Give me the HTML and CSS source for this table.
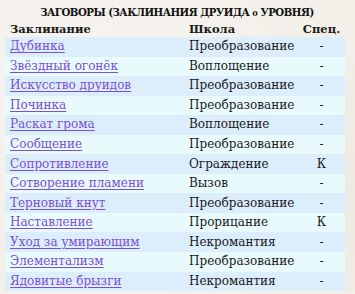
FILE: index.html
```html
<!DOCTYPE html>
<html lang="ru">
<head>
<meta charset="utf-8">
<link rel="stylesheet" href="styles.css">
</head>
<body>
<div class="page">
  <div class="title">ЗАГОВОРЫ (ЗАКЛИНАНИЯ ДРУИДА <span class="zero">0</span> УРОВНЯ)</div>
  <table class="spells">
    <thead>
      <tr><th class="c-name">Заклинание</th><th class="c-school">Школа</th><th class="c-spec">Спец.</th></tr>
    </thead>
    <tbody>
      <tr><td><a href="#">Дубинка</a></td><td>Преобразование</td><td class="c-spec">-</td></tr>
      <tr><td><a href="#">Звёздный огонёк</a></td><td>Воплощение</td><td class="c-spec">-</td></tr>
      <tr><td><a href="#">Искусство друидов</a></td><td>Преобразование</td><td class="c-spec">-</td></tr>
      <tr><td><a href="#">Починка</a></td><td>Преобразование</td><td class="c-spec">-</td></tr>
      <tr><td><a href="#">Раскат грома</a></td><td>Воплощение</td><td class="c-spec">-</td></tr>
      <tr><td><a href="#">Сообщение</a></td><td>Преобразование</td><td class="c-spec">-</td></tr>
      <tr><td><a href="#">Сопротивление</a></td><td>Ограждение</td><td class="c-spec">К</td></tr>
      <tr><td><a href="#">Сотворение пламени</a></td><td>Вызов</td><td class="c-spec">-</td></tr>
      <tr><td><a href="#">Терновый кнут</a></td><td>Преобразование</td><td class="c-spec">-</td></tr>
      <tr><td><a href="#">Наставление</a></td><td>Прорицание</td><td class="c-spec">К</td></tr>
      <tr><td><a href="#">Уход за умирающим</a></td><td>Некромантия</td><td class="c-spec">-</td></tr>
      <tr><td><a href="#">Элементализм</a></td><td>Преобразование</td><td class="c-spec">-</td></tr>
      <tr><td><a href="#">Ядовитые брызги</a></td><td>Некромантия</td><td class="c-spec">-</td></tr>
    </tbody>
  </table>
</div>
</body>
</html>
```

FILE: styles.css
```css
html, body {
  margin: 0;
  padding: 0;
}
body {
  background-color: #f3efe9;
  background-image:
    radial-gradient(ellipse at 20% 30%, rgba(255,255,255,0.35), rgba(255,255,255,0) 60%),
    radial-gradient(ellipse at 80% 70%, rgba(220,210,195,0.25), rgba(220,210,195,0) 60%);
  font-family: "DejaVu Serif", "Liberation Serif", serif;
  color: #1a1a1a;
}
.page {
  padding: 4px 10px 0 5px;
}
.title {
  text-align: center;
  font-weight: bold;
  font-size: 10.2px;
  letter-spacing: -0.5px;
  line-height: 16px;
  height: 18px;
  color: #111;
  padding-left: 4px;
}
.zero {
  font-size: 8px;
}
.spells {
  border-collapse: collapse;
  width: 340px;
  font-size: 12px;
}
.spells th {
  text-align: left;
  font-weight: bold;
  font-size: 11.5px;
  height: 15px;
  padding: 0 0 0 5px;
  line-height: 15px;
  vertical-align: middle;
}
.spells td {
  height: 19.55px;
  padding: 0 0 0 5px;
  line-height: 19px;
  white-space: nowrap;
}
.spells .c-name { width: 174px; }
.spells .c-school { width: 109px; }
.spells .c-spec {
  text-align: center;
  padding: 0;
}
.spells tbody tr:nth-child(odd) { background: #dcedfc; }
.spells tbody tr:nth-child(even) { background: #e9fafd; }
.spells a {
  color: #7b4fd6;
  text-decoration: underline;
  text-underline-offset: 2px;
}
```
